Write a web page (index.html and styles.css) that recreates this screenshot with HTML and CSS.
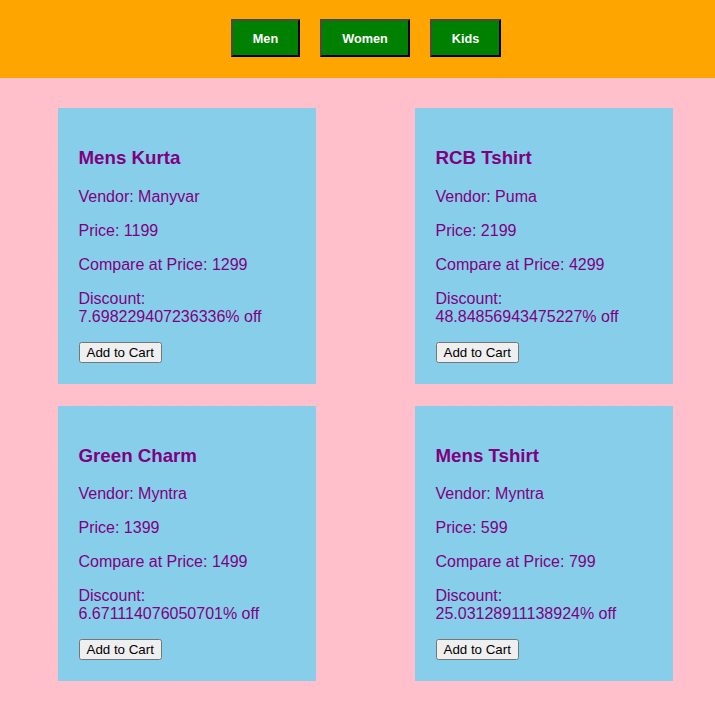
FILE: index.html
```html
<!DOCTYPE html>
<html>
<head>
<meta charset="utf-8">
<link rel="stylesheet" href="styles.css">
</head>
<body>
<header class="nav">
  <button class="nav-btn">Men</button>
  <button class="nav-btn">Women</button>
  <button class="nav-btn">Kids</button>
</header>
<main class="grid">
  <div class="card">
    <h3>Mens Kurta</h3>
    <p>Vendor: Manyvar</p>
    <p>Price: 1199</p>
    <p>Compare at Price: 1299</p>
    <p>Discount: 7.698229407236336% off</p>
    <button class="cart">Add to Cart</button>
  </div>
  <div class="card">
    <h3>RCB Tshirt</h3>
    <p>Vendor: Puma</p>
    <p>Price: 2199</p>
    <p>Compare at Price: 4299</p>
    <p>Discount: 48.84856943475227% off</p>
    <button class="cart">Add to Cart</button>
  </div>
  <div class="card">
    <h3>Green Charm</h3>
    <p>Vendor: Myntra</p>
    <p>Price: 1399</p>
    <p>Compare at Price: 1499</p>
    <p>Discount: 6.671114076050701% off</p>
    <button class="cart">Add to Cart</button>
  </div>
  <div class="card">
    <h3>Mens Tshirt</h3>
    <p>Vendor: Myntra</p>
    <p>Price: 599</p>
    <p>Compare at Price: 799</p>
    <p>Discount: 25.03128911138924% off</p>
    <button class="cart">Add to Cart</button>
  </div>
</main>
</body>
</html>
```

FILE: styles.css
```css
html, body {
  margin: 0;
  padding: 0;
}
body {
  background: #ffc0cb;
  font-family: "Liberation Sans", Arial, sans-serif;
  color: #800080;
}
.nav {
  background: #ffa500;
  height: 78px;
  box-sizing: border-box;
  padding: 19px 0 21px 17px;
  display: flex;
  justify-content: center;
  align-items: flex-start;
  gap: 20px;
}
.nav-btn {
  margin: 0;
  height: 38px;
  padding: 1px 20px 0;
  background: #008000;
  color: #fff;
  font-family: "Liberation Sans", Arial, sans-serif;
  font-weight: bold;
  font-size: 12.7px;
  border-style: solid;
  border-width: 2px;
  border-color: #4a4a4a #000 #000 #4a4a4a;
  cursor: pointer;
}
.grid {
  display: grid;
  grid-template-columns: 357px 1fr;
  row-gap: 22px;
  padding: 30px 0 22px;
}
.card {
  background: #87ceeb;
  width: 258px;
  box-sizing: border-box;
  margin-left: 58px;
  padding: 20px 20px 21px 20.5px;
}
.card h3 {
  font-size: 18.72px;
  margin: 19px 0 18.72px;
}
.card p {
  font-size: 16px;
  margin: 16px 0;
}
.cart {
  display: block;
  height: 21px;
  font-family: "Liberation Sans", Arial, sans-serif;
  font-size: 13.333px;
}
```
